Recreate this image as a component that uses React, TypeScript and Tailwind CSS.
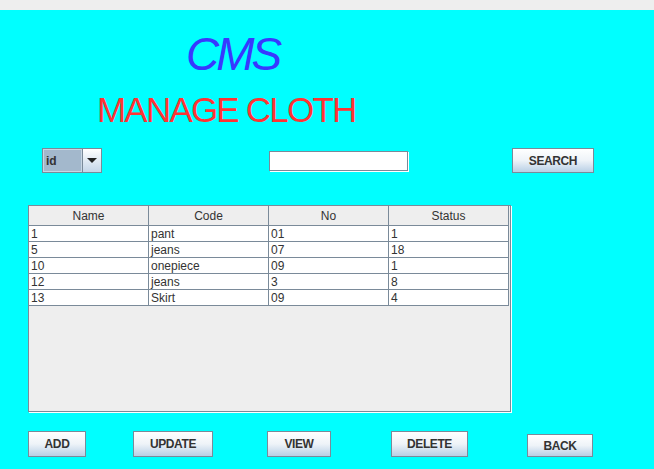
import React from "react";

const rows = [
  ["1", "pant", "01", "1"],
  ["5", "jeans", "07", "18"],
  ["10", "onepiece", "09", "1"],
  ["12", "jeans", "3", "8"],
  ["13", "Skirt", "09", "4"],
];

const headers = ["Name", "Code", "No", "Status"];

function MetalButton({ label, className = "" }: { label: string; className?: string }) {
  return (
    <button
      type="button"
      className={`flex items-center justify-center border border-[#7a8a99] bg-gradient-to-b from-white via-[#eef3f8] to-[#b8cfe5] text-[12px] font-bold tracking-[-0.4px] text-[#333333] ${className}`}
    >
      {label}
    </button>
  );
}

export default function App() {
  return (
    <div
      className="flex h-[469px] w-[654px] flex-col overflow-hidden bg-[#00ffff]"
      style={{ fontFamily: '"Liberation Sans", Arial, sans-serif' }}
    >
      <div className="h-[10px] shrink-0 bg-[#eeeeee]" />

      <div className="mt-[21px] h-[46px] pl-[186px] text-[46px] italic leading-none tracking-[-3px] text-[#3838ff]">
        CMS
      </div>

      <div className="mt-[15px] h-[35px] pl-[97px] text-[35px] leading-none tracking-[-1.8px] text-[#ff3333]">
        MANAGE CLOTH
      </div>

      <div className="mt-[21px] flex h-[25px] items-center">
        <div className="ml-[42px] flex h-[25px] w-[60px] border border-[#7a8a99]">
          <div className="flex w-[39px] items-center border border-[#c8d6e4] bg-[#a3b8cc] pl-[2px] text-[12px] font-bold text-[#333333]">
            id
          </div>
          <div className="flex flex-1 items-center justify-center border-l border-[#7a8a99] bg-gradient-to-b from-white to-[#c5d6e8]">
            <div className="h-0 w-0 border-x-[5px] border-t-[5px] border-x-transparent border-t-[#222222]" />
          </div>
        </div>

        <div className="ml-[167px] h-[20px] w-[139px] border border-[#7a8a99] bg-white shadow-[1px_1px_0_#ffffff]" />

        <MetalButton label="SEARCH" className="ml-[104px] h-[25px] w-[82px]" />
      </div>

      <div className="ml-[28px] mt-[32px] flex h-[207px] w-[483px] flex-col border border-[#7a8a99] bg-[#eeeeee] shadow-[1px_1px_0_#ffffff]">
        <div className="grid grid-cols-[120px_120px_120px_120px]">
          {headers.map((h) => (
            <div
              key={h}
              className="flex h-[20px] items-center justify-center border-b border-r border-[#7a8a99] bg-[#eeeeee] text-[12px] text-[#333333]"
            >
              {h}
            </div>
          ))}
          {rows.map((r, i) =>
            r.map((c, j) => (
              <div
                key={`${i}-${j}`}
                className="flex h-[16px] items-center border-b border-r border-[#7a8a99] bg-white pl-[2px] text-[12px] text-[#333333]"
              >
                {c}
              </div>
            ))
          )}
        </div>
      </div>

      <div className="mt-[19px] flex items-end">
        <MetalButton label="ADD" className="ml-[28px] h-[26px] w-[58px]" />
        <MetalButton label="UPDATE" className="ml-[47px] h-[26px] w-[80px]" />
        <MetalButton label="VIEW" className="ml-[54px] h-[26px] w-[64px]" />
        <MetalButton label="DELETE" className="ml-[60px] h-[26px] w-[77px]" />
        <MetalButton label="BACK" className="ml-[59px] h-[23px] w-[66px]" />
      </div>
    </div>
  );
}
